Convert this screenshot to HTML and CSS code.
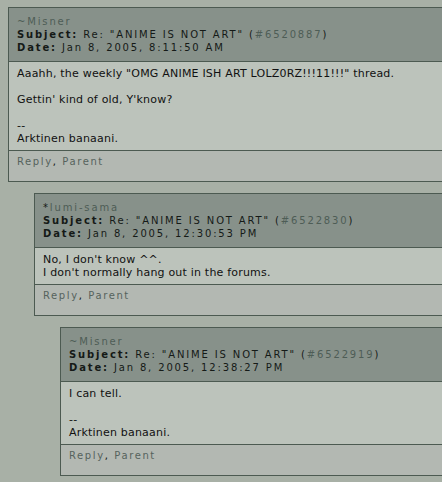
FILE: index.html
```html
<!DOCTYPE html>
<html lang="en">
<head>
  <meta charset="UTF-8">
  <title>Re: "ANIME IS NOT ART"</title>
  <link rel="stylesheet" href="styles.css">
</head>
<body>
  <div class="thread">
    <div class="post">
      <div class="post-head">
        <div class="author">~Misner</div>
        <div><b>Subject:</b> Re: "ANIME IS NOT ART" (<a href="#">#6520887</a>)</div>
        <div><b>Date:</b> Jan 8, 2005, 8:11:50 AM</div>
      </div>
      <div class="post-body">
        Aaahh, the weekly "OMG ANIME ISH ART LOLZ0RZ!!!11!!!" thread.<br>
        <br>
        Gettin' kind of old, Y'know?<br>
        <br>
        --<br>
        Arktinen banaani.
      </div>
      <div class="post-foot"><a href="#">Reply</a>, <a href="#">Parent</a></div>
    </div>

    <div class="replies">
      <div class="post">
        <div class="post-head">
          <div class="author"><span class="sym">*</span>lumi-sama</div>
          <div><b>Subject:</b> Re: "ANIME IS NOT ART" (<a href="#">#6522830</a>)</div>
          <div><b>Date:</b> Jan 8, 2005, 12:30:53 PM</div>
        </div>
        <div class="post-body">
          No, I don't know ^^.<br>
          I don't normally hang out in the forums.
        </div>
        <div class="post-foot"><a href="#">Reply</a>, <a href="#">Parent</a></div>
      </div>

      <div class="replies">
        <div class="post">
          <div class="post-head">
            <div class="author">~Misner</div>
            <div><b>Subject:</b> Re: "ANIME IS NOT ART" (<a href="#">#6522919</a>)</div>
            <div><b>Date:</b> Jan 8, 2005, 12:38:27 PM</div>
          </div>
          <div class="post-body">
            I can tell.<br>
            <br>
            --<br>
            Arktinen banaani.
          </div>
          <div class="post-foot"><a href="#">Reply</a>, <a href="#">Parent</a></div>
        </div>
      </div>
    </div>
  </div>
</body>
</html>
```

FILE: styles.css
```css
html, body {
  margin: 0;
  overflow: hidden;
}
body {
  background: #a8b0a6;
  font-family: 'DejaVu Sans', Verdana, sans-serif;
  color: #111;
}
a {
  color: #4e5d56;
  text-decoration: none;
}
.thread {
  width: 434px;
  padding: 7px 0 0 8px;
  overflow: hidden;
}
.replies {
  margin-left: 26px;
  padding-top: 11px;
}
.post {
  width: 480px;
  border: 1px solid #4c5a51;
  border-right: none;
}
.post-head {
  background: #87918a;
  padding: 7px 8px;
  font-size: 10px;
  line-height: 13px;
  letter-spacing: 1.85px;
  white-space: nowrap;
  color: #151a17;
  border-bottom: 1px solid #4c5a51;
}
.author {
  color: #4e5d56;
}
.author .sym {
  color: #151a17;
}
.post-body {
  background: #bcc3bb;
  padding: 5px 8px;
  font-size: 11px;
  line-height: 13px;
  letter-spacing: 0.2px;
  border-bottom: 1px solid #4c5a51;
}
.post-foot {
  background: #b3b8b2;
  padding: 4px 8px 13px;
  font-size: 10px;
  line-height: 13px;
  letter-spacing: 1.6px;
}
.post-foot a {
  color: #56635d;
}
```
